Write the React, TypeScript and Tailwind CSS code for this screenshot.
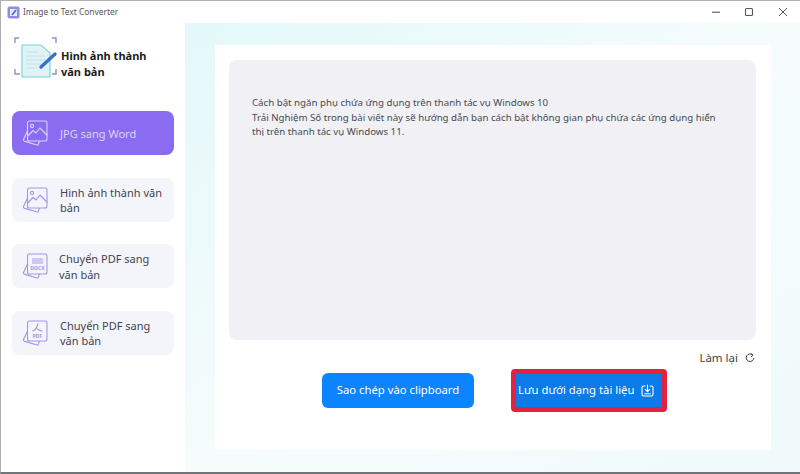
import React from "react";

function Stack({ children, stroke = "#a594e8" }: { children?: React.ReactNode; stroke?: string }) {
  return (
    <svg width="26" height="26" viewBox="0 0 26 26" fill="none" stroke={stroke} strokeWidth="1.1" strokeLinejoin="round" strokeLinecap="round" className="shrink-0">
      <path d="M5.5 11 L1.5 19.5 a1.2 1.2 0 0 0 .7 1.6 L15 25 a1.2 1.2 0 0 0 1.5-.8 L17.3 21.5" />
      <rect x="5.5" y="1" width="19.5" height="20" rx="2" />
      {children}
    </svg>
  );
}

function ImgGlyph({ stroke }: { stroke: string }) {
  return (
    <g stroke={stroke}>
      <circle cx="10" cy="6" r="1.6" />
      <path d="M5.8 16 L11 10.5 L14 13 L18 8 L24.8 15" />
    </g>
  );
}

function NavItem({ icon, label, active, textClass }: { icon: React.ReactNode; label: React.ReactNode; active?: boolean; textClass?: string }) {
  return (
    <div className={`w-[162px] h-[44px] rounded-lg flex items-center pl-[10px] ${active ? "bg-[#8a6cf0] text-[#dcd4fb]" : "bg-[#f3f5fb] text-[#444450]"}`}>
      <div className="w-[37px] shrink-0">{icon}</div>
      <div className={`text-[11px] leading-[15.500px] whitespace-nowrap pt-[1px] ${textClass ?? ""}`}>{label}</div>
    </div>
  );
}

export default function App() {
  return (
    <div className="w-[800px] h-[474px] overflow-hidden bg-white flex flex-col border-t border-l border-b-2 border-[#b0b0b0] border-b-[#707478] text-[#333]" style={{ fontFamily: '"Noto Sans", "Open Sans", sans-serif' }}>
      <header className="h-[22px] flex items-center shrink-0 pl-[6px] bg-white">
        <svg width="13" height="13" viewBox="0 0 13 13" className="shrink-0">
          <rect x="0.5" y="0.5" width="12" height="12" rx="2" fill="#8f8be0" />
          <path d="M3 3h6l1 1v6H3z" fill="#e6edfa" />
          <path d="M5 9l4-5" stroke="#4d63c9" strokeWidth="1.6" />
        </svg>
        <span className="ml-[3px] text-[8.400px] text-[#555]">Image to Text Converter</span>
        <div className="ml-auto flex items-center text-[#555]">
          <svg width="10" height="10" viewBox="0 0 10 10" className="mr-[23px]"><path d="M1 5.200h8" stroke="#555" strokeWidth="1.100" /></svg>
          <svg width="10" height="10" viewBox="0 0 10 10" className="mr-[24px]"><rect x="1.500" y="1.500" width="7" height="7" rx="1" fill="none" stroke="#555" strokeWidth="1.100" /></svg>
          <svg width="10" height="10" viewBox="0 0 10 10" className="mr-[12px]"><path d="M1 1l8 8M9 1l-8 8" stroke="#555" strokeWidth="1" /></svg>
        </div>
      </header>
      <div className="flex-1 flex min-h-0">
        <aside className="w-[184px] shrink-0 bg-white flex flex-col pl-[11px]">
          <div className="h-[88px] flex items-start">
            <svg width="46" height="42" viewBox="0 0 46 42" className="ml-[2px] mt-[14px] shrink-0" fill="none">
              <path d="M1 6V1h4M38 1h4v5M1 32v5h5M38 37h4v-5" stroke="#8f8fc8" strokeWidth="1.400" />
              <path d="M8 8h19l9 8v24H8z" fill="#dff3f5" stroke="#7fd4d8" strokeWidth="1.200" />
              <path d="M12 15h12M12 19h19M12 23h19M12 27h15M12 31h11" stroke="#bfe3ea" strokeWidth="1.100" />
              <path d="M27 30L41 17" stroke="#3d71c9" strokeWidth="3.400" strokeLinecap="round" />
            </svg>
            <div className="ml-[1px] mt-[25px] text-[11px] leading-[16px] font-bold text-[#1c1c1c] whitespace-nowrap">Hình ảnh thành<br />văn bản</div>
          </div>
          <div className="flex flex-col gap-[22.600px]">
            <NavItem active label="JPG sang Word" textClass="pl-[1px]" icon={<Stack stroke="#d9d0fb"><ImgGlyph stroke="#d9d0fb" /></Stack>} />
            <NavItem label={<>Hình ảnh thành văn<br />bản</>} textClass="pl-[1px]" icon={<Stack><ImgGlyph stroke="#a594e8" /></Stack>} />
            <NavItem label={<>Chuyển PDF sang<br />văn bản</>} icon={<Stack><rect x="10" y="5" width="11" height="6" fill="#cfc7f3" stroke="none" /><text x="15.500" y="16.500" fontSize="5" fontWeight="700" textAnchor="middle" fill="#a594e8" stroke="none">DOCX</text></Stack>} />
            <NavItem label={<>Chuyển PDF sang<br />văn bản</>} textClass="pl-[1px]" icon={<Stack><path d="M11 11c2-1 4-4 5-7M15 9c2 1 3 2 5 2" /><text x="15.500" y="17.500" fontSize="5" fontWeight="700" textAnchor="middle" fill="#a594e8" stroke="none">PDF</text></Stack>} />
          </div>
        </aside>
        <main className="flex-1 min-w-0 bg-linear-to-br from-[#e3f8fa] via-[#f6fcfc] to-[#f0fafb] pt-[22px] pl-[30px] pr-[29px]">
          <section className="h-[405px] bg-white pt-[15px] pl-[14px] pr-[15px] flex flex-col">
            <div className="h-[280px] bg-[#f0f0f5] rounded-lg pt-[36px] pl-[23px] pr-[30px] text-[9.700px] leading-[14.500px] text-[#4a4a50]">
              <p>Cách bật ngăn phụ chứa ứng dụng trên thanh tác vụ Windows 10</p>
              <p>Trải Nghiệm Số trong bài viết này sẽ hướng dẫn bạn cách bật không gian phụ chứa các ứng dụng hiển thị trên thanh tác vụ Windows 11.</p>
            </div>
            <div className="mt-[10px] flex justify-end items-center gap-[7px] text-[11.500px] text-[#444] pr-[1px] h-[16px]">
              <span>Làm lại</span>
              <svg width="10" height="10" viewBox="0 0 10 10" fill="none" stroke="#444" strokeWidth="1"><path d="M7.800 2.200A3.800 3.800 0 1 0 8.800 5" /><path d="M5.800 0.500L8 2.200 6 3.800" /></svg>
            </div>
            <div className="mt-[3px] flex items-start pl-[93px] gap-[37px]">
              <button className="mt-[4px] w-[152px] h-[35px] rounded-md bg-[#0a84ff] text-white text-[11.300px] whitespace-nowrap">Sao chép vào clipboard</button>
              <button className="w-[156px] h-[43px] rounded-sm bg-[#0a7be8] border-[5px] border-[#e3223f] text-white text-[11.300px] flex items-center pl-[2px] gap-[7px] whitespace-nowrap">
                <span>Lưu dưới dạng tài liệu</span>
                <svg width="13" height="13" viewBox="0 0 13 13" fill="none" stroke="#fff" strokeWidth="1.100" strokeLinecap="round" strokeLinejoin="round" className="shrink-0"><path d="M4 2H2.500A1.500 1.500 0 0 0 1 3.500v7A1.500 1.500 0 0 0 2.500 12h8a1.500 1.500 0 0 0 1.500-1.500v-7A1.500 1.500 0 0 0 10.500 2H9" /><path d="M6.500 1v6.500M4.300 5.500l2.200 2.200 2.200-2.200M3.800 9.800h5.400" /></svg>
              </button>
            </div>
          </section>
        </main>
      </div>
    </div>
  );
}
